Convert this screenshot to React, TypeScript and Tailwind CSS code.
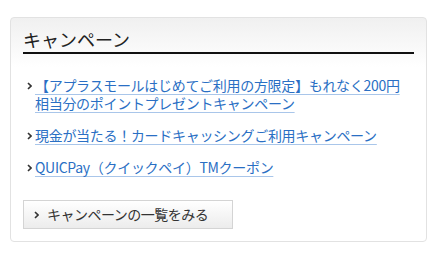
import React from "react";

const Chevron = ({ className = "" }: { className?: string }) => (
  <svg width="5" height="8" viewBox="0 0 5 8" className={className}>
    <polyline points="1,1 4,4 1,7" fill="none" stroke="#333" strokeWidth="1.6" />
  </svg>
);

const items: string[][] = [
  ["【アプラスモールはじめてご利用の方限定】もれなく200円", "相当分のポイントプレゼントキャンペーン"],
  ["現金が当たる！カードキャッシングご利用キャンペーン"],
  ["QUICPay（クイックペイ）TMクーポン"],
];

export default function App() {
  return (
    <div
      className="w-[436px] h-[260px] bg-white pt-[17px] pl-[10px]"
      style={{ fontFamily: '"Noto Sans CJK JP", "Noto Sans", sans-serif' }}
    >
      <div className="w-[417px] h-[225px] rounded-[4px] border border-[#e2e2e2] bg-gradient-to-b from-[#f0f0f0] via-white via-[22%] to-white px-[12px] pt-[9px]">
        <div className="border-b-2 border-[#111] pb-[1px]">
          <h2 className="text-[18px] leading-[24px] text-[#222] font-normal">キャンペーン</h2>
        </div>
        <ul className="mt-[22px] flex flex-col gap-[14px]">
          {items.map((lines, i) => (
            <li key={i} className="flex items-start pl-[4px]">
              <Chevron className="mt-[6px] shrink-0" />
              <div className="ml-[3px] text-[14px] leading-[18px] tracking-[-0.3px] text-[#2a6fc4]">
                {lines.map((l, j) => (
                  <div key={j}>
                    <a className="underline decoration-[#a9c6ea] underline-offset-[3px]">{l}</a>
                  </div>
                ))}
              </div>
            </li>
          ))}
        </ul>
        <button className="mt-[24px] w-[210px] h-[29px] flex items-center border border-[#d4d4d4] bg-gradient-to-b from-white to-[#ececec] pl-[10px] text-[14px] tracking-[-0.5px] text-[#333]">
          <Chevron className="shrink-0" />
          <span className="ml-[8px]">キャンペーンの一覧をみる</span>
        </button>
      </div>
    </div>
  );
}
